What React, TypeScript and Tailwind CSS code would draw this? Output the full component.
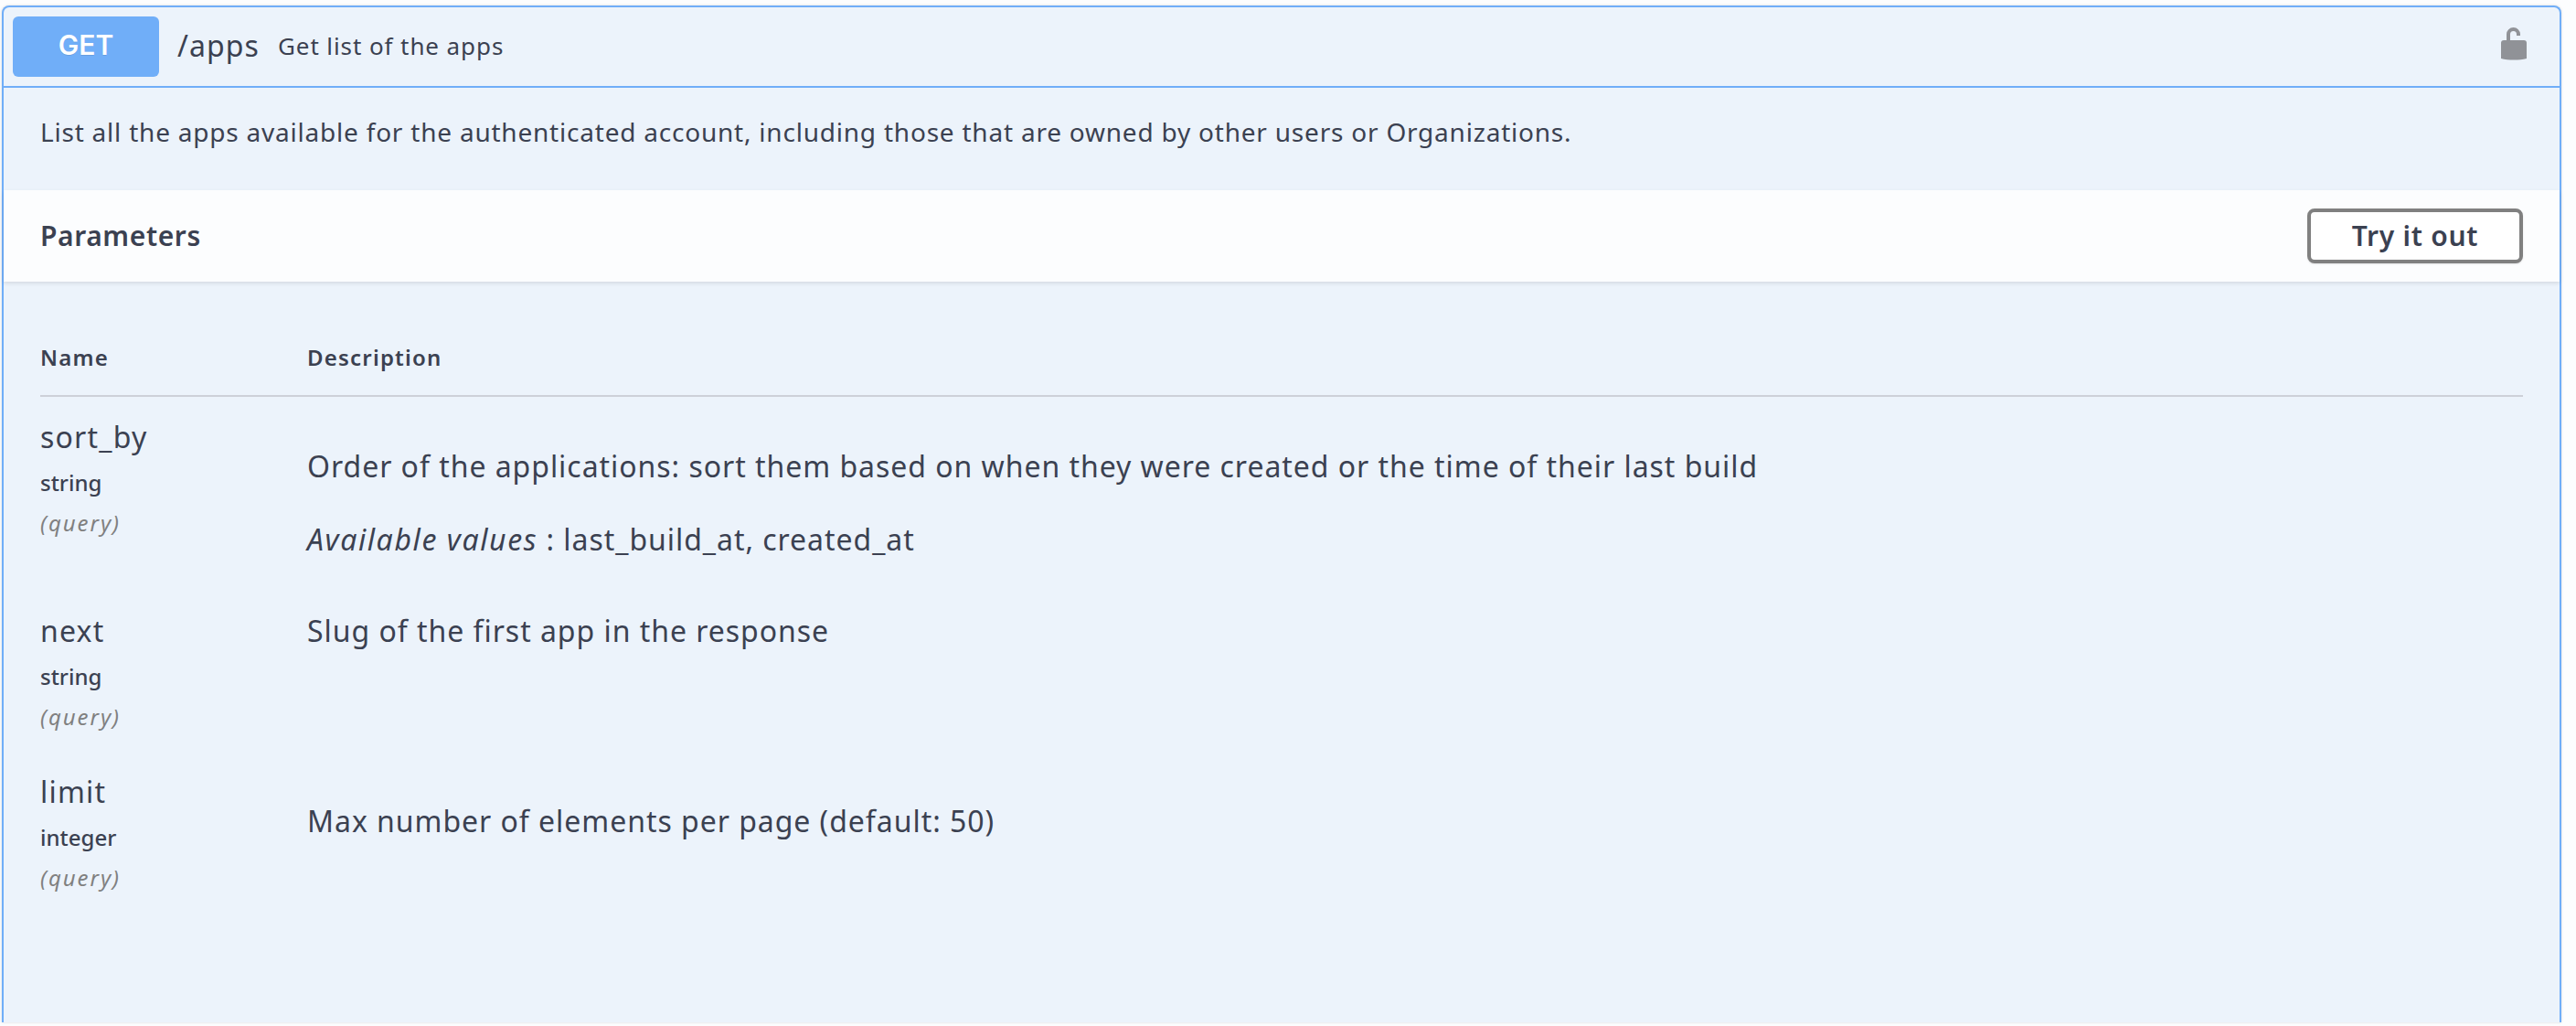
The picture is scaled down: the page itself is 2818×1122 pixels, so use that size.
import React from 'react';

const FONT = "font-['Noto_Sans',sans-serif]";

interface Param {
  name: string;
  type: string;
  rowClass: string;
  descClass: string;
  description: string;
  values?: string;
}

const params: Param[] = [
  {
    name: 'sort_by',
    type: 'string',
    rowClass: 'h-[212px]',
    descClass: 'pt-[32px]',
    description:
      'Order of the applications: sort them based on when they were created or the time of their last build',
    values: 'last_build_at, created_at',
  },
  {
    name: 'next',
    type: 'string',
    rowClass: 'h-[176px]',
    descClass: 'pt-[0px]',
    description: 'Slug of the first app in the response',
  },
  {
    name: 'limit',
    type: 'integer',
    rowClass: 'h-[175px]',
    descClass: 'pt-[32px]',
    description: 'Max number of elements per page (default: 50)',
  },
];

const LockIcon = () => (
  <svg width="28" height="37" viewBox="0 0 28 37" fill="none">
    <path d="M8 15V7.500a5.500 5.500 0 0 1 11 0V9" stroke="#909297" strokeWidth="4" fill="none" />
    <path
      d="M0 17a3 3 0 0 1 3-3h22a3 3 0 0 1 3 3v17c-4 1-9 1.500-14 1.500S4 35 0 34z"
      fill="#909297"
    />
  </svg>
);

const ParamRow: React.FC<{ param: Param }> = ({ param }) => (
  <div className={`flex ${param.rowClass}`}>
    <div className="w-[292px] shrink-0">
      <div className="text-[32px] leading-[44px] tracking-[0.038em] text-[#3b4151]">{param.name}</div>
      <div className="mt-[12px] text-[24px] font-medium leading-[32px] text-[#3b4151]">{param.type}</div>
      <div className="mt-[12px] text-[24px] italic leading-[32px] tracking-[0.08em] text-[#808080]">(query)</div>
    </div>
    <div className={`${param.descClass} text-[32px] leading-[44px] tracking-[0.03em] text-[#3b4151]`}>
      <p>{param.description}</p>
      {param.values && (
        <p className="mt-[36px]">
          <i className="tracking-[0.05em]">Available values</i> : {param.values}
        </p>
      )}
    </div>
  </div>
);

export default function App() {
  return (
    <div className={`${FONT} min-h-[1122px] bg-[#fcfdfe] pl-[2px] pt-[6px] pr-[16px]`}>
      <div className="h-[1112px] rounded-t-[8px] border-x-2 border-t-2 border-[#70aef8] bg-[#ecf3fb] shadow-[0_0_3px_rgba(0,0,0,0.15)]">
        <div className="flex h-[88px] items-center border-b-2 border-[#70aef8] pl-[10px] pr-[36px]">
          <div className="flex h-[66px] w-[160px] items-center justify-center rounded-[6px] bg-[#70aef8] pb-[4px] font-['Inter',sans-serif] text-[30px] font-semibold text-white [text-shadow:0_1px_0_rgba(0,0,0,0.1)]">
            GET
          </div>
          <span className="ml-[20px] mb-[2px] text-[32px] tracking-[0.034em] text-[#3b4151]">/apps</span>
          <span className="ml-[20px] mb-[2px] text-[26px] tracking-[0.035em] text-[#3b4151]">Get list of the apps</span>
          <div className="ml-auto mb-[6px]">
            <LockIcon />
          </div>
        </div>
        <div className="flex h-[112px] items-start px-[40px] pt-[28px] text-[28px] leading-[40px] tracking-[0.028em] text-[#3b4151]">
          List all the apps available for the authenticated account, including those that are owned by other users or Organizations.
        </div>
        <div className="flex h-[100px] items-center justify-between bg-[#fcfdfe] pl-[40px] pr-[40px] shadow-[0_2px_4px_rgba(0,0,0,0.1)]">
          <span className="mb-[2px] text-[30px] font-semibold tracking-[0.02em] text-[#3b4151]">Parameters</span>
          <button
            type="button"
            className="h-[60px] w-[236px] rounded-[8px] border-[4px] border-[#808080] bg-white pb-[2px] text-[30px] font-semibold tracking-[0.024em] text-[#3b4151] shadow-[0_1px_2px_rgba(0,0,0,0.1)]"
          >
            Try it out
          </button>
        </div>
        <div className="px-[40px] pt-[62px]">
          <div className="flex h-[64px] border-b-2 border-[#cdd0d8] pt-[5px] text-[24px] font-semibold leading-[32px] tracking-[0.05em] text-[#3b4151]">
            <div className="w-[292px]">Name</div>
            <div>Description</div>
          </div>
          <div className="pt-[22px]">
            {params.map((p) => (
              <ParamRow key={p.name} param={p} />
            ))}
          </div>
        </div>
      </div>
    </div>
  );
}
